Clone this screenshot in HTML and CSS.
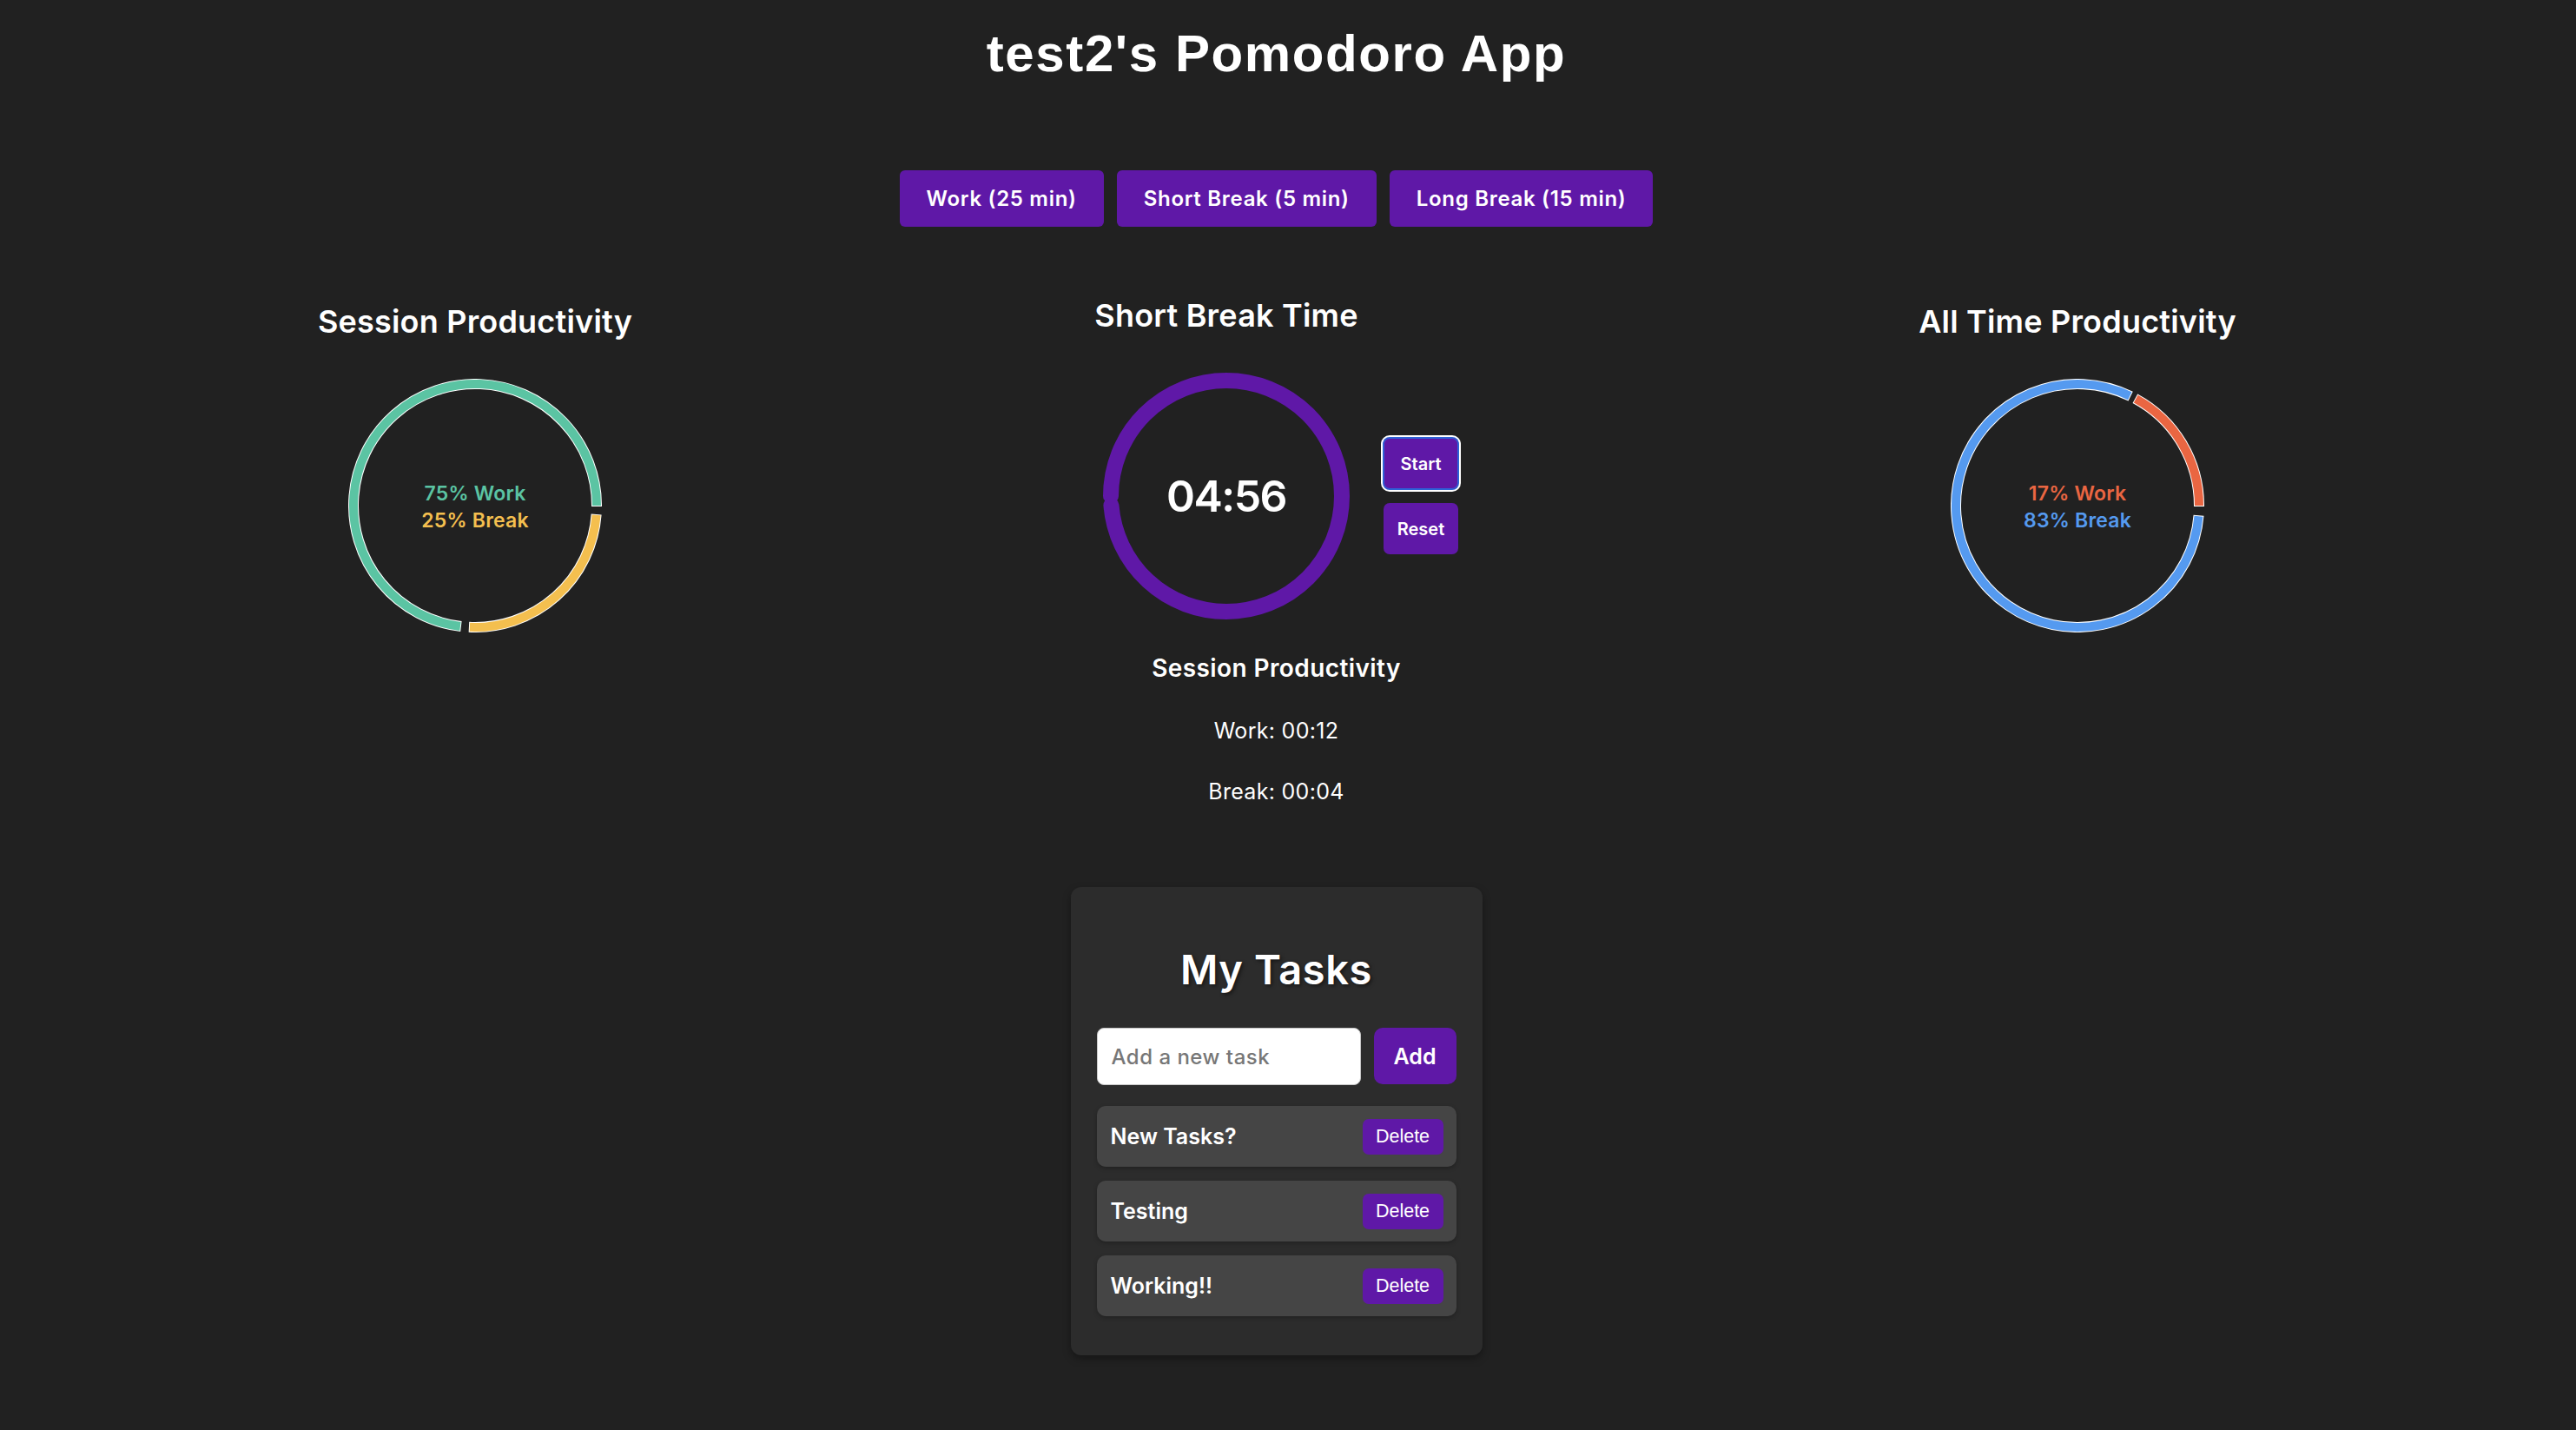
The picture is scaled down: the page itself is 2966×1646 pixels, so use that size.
FILE: index.html
```html
<!DOCTYPE html>
<html lang="en">
<head>
<meta charset="utf-8">
<title>test2's Pomodoro App</title>
<link rel="stylesheet" href="styles.css">
</head>
<body>
<div class="page">
  <h1 class="app-title">test2's Pomodoro App</h1>

  <div class="modes">
    <button class="mode-btn">Work (25 min)</button>
    <button class="mode-btn">Short Break (5 min)</button>
    <button class="mode-btn">Long Break (15 min)</button>
  </div>

  <div class="stats-row">
    <section class="chart-col chart-left">
      <h3 class="col-title">Session Productivity</h3>
      <div class="donut">
        <svg class="donut-svg" width="292" height="292" viewBox="0 0 292 292">
          <path class="seg-outline" d="M129.91 285.07 A140 140 0 1 1 286 146.98"/>
          <path class="seg seg-green" d="M128.94 284.96 A140 140 0 1 1 286 146"/>
          <path class="seg-outline" d="M285.64 156.01 A140 140 0 0 1 138.92 285.82"/>
          <path class="seg seg-yellow" d="M285.57 156.98 A140 140 0 0 1 139.89 285.87"/>
        </svg>
        <div class="donut-label">
          <span class="c-green">75% Work</span>
          <span class="c-yellow">25% Break</span>
        </div>
      </div>
    </section>

    <section class="timer-col">
      <h3 class="col-title timer-title">Short Break Time</h3>
      <div class="timer-body">
        <div class="timer-ring">
          <svg width="284" height="284" viewBox="0 0 284 284">
            <circle class="ring" cx="142" cy="142" r="133" transform="rotate(180 142 142)"/>
          </svg>
          <span class="timer-time">04:56</span>
        </div>
        <div class="timer-btns">
          <button class="small-btn is-focused">Start</button>
          <button class="small-btn">Reset</button>
        </div>
      </div>
    </section>

    <section class="chart-col chart-right">
      <h3 class="col-title">All Time Productivity</h3>
      <div class="donut">
        <svg class="donut-svg" width="292" height="292" viewBox="0 0 292 292">
          <path class="seg-outline" d="M212.37 22.73 A140 140 0 0 1 286 146.98"/>
          <path class="seg seg-orange" d="M213.22 23.2 A140 140 0 0 1 286 146"/>
          <path class="seg-outline" d="M285.55 157.23 A140 140 0 1 1 207.15 20.06"/>
          <path class="seg seg-blue" d="M285.47 158.2 A140 140 0 1 1 206.27 19.64"/>
        </svg>
        <div class="donut-label">
          <span class="c-orange">17% Work</span>
          <span class="c-blue">83% Break</span>
        </div>
      </div>
    </section>
  </div>

  <div class="session">
    <h4 class="session-title">Session Productivity</h4>
    <p class="session-line first">Work: 00:12</p>
    <p class="session-line">Break: 00:04</p>
  </div>

  <div class="tasks-card">
    <h2 class="tasks-title">My Tasks</h2>
    <div class="task-form">
      <input class="task-input" type="text" placeholder="Add a new task">
      <button class="add-btn">Add</button>
    </div>
    <ul class="task-list">
      <li class="task-item"><span class="task-name">New Tasks?</span><button class="del-btn">Delete</button></li>
      <li class="task-item"><span class="task-name">Testing</span><button class="del-btn">Delete</button></li>
      <li class="task-item"><span class="task-name">Working!!</span><button class="del-btn">Delete</button></li>
    </ul>
  </div>
</div>
</body>
</html>
```

FILE: styles.css
```css
* { box-sizing: border-box; }

html, body {
  margin: 0;
  padding: 0;
  background: #212121;
}

body {
  color: #ffffff;
  font-family: Inter, "Open Sans", sans-serif;
}

.page {
  width: 2939px;
  display: flex;
  flex-direction: column;
  align-items: center;
  padding-bottom: 80px;
}

.app-title {
  margin: 28px 0 0;
  font-family: "Liberation Sans", Arial, sans-serif;
  font-weight: 700;
  font-size: 60px;
  line-height: 67px;
  letter-spacing: 1.6px;
  color: #ffffff;
}

.modes {
  margin-top: 101px;
  display: flex;
  gap: 15px;
}

.mode-btn {
  height: 65px;
  padding: 0 31px;
  border: none;
  border-radius: 6px;
  background: #5f18a7;
  color: #ffffff;
  font-family: Inter, "Open Sans", sans-serif;
  font-weight: 600;
  font-size: 24px;
  letter-spacing: 0.7px;
}

.stats-row {
  margin-top: 80px;
  align-self: stretch;
  display: flex;
  align-items: flex-start;
  padding-left: 347px;
}

.chart-col {
  width: 400px;
  padding-top: 7px;
  display: flex;
  flex-direction: column;
  align-items: center;
}

.chart-left { margin-right: 523px; }
.chart-right { margin-left: 513px; }

.col-title {
  margin: 0;
  font-weight: 600;
  font-size: 36px;
  line-height: 44px;
  letter-spacing: 0.2px;
  white-space: nowrap;
}

.donut {
  position: relative;
  margin-top: 44px;
  width: 292px;
  height: 292px;
}

.donut-svg { display: block; }

.seg-outline {
  fill: none;
  stroke: #ffffff;
  stroke-width: 12;
}

.seg {
  fill: none;
  stroke-width: 10;
}

.seg-green { stroke: #5bc4a3; }
.seg-yellow { stroke: #f4bf4f; }
.seg-orange { stroke: #ea6642; }
.seg-blue { stroke: #559af0; }

.donut-label {
  position: absolute;
  inset: 0;
  padding-top: 4px;
  display: flex;
  flex-direction: column;
  align-items: center;
  justify-content: center;
  font-weight: 600;
  font-size: 23px;
  line-height: 31px;
  letter-spacing: 0.2px;
}

.c-green { color: #5bc4a3; }
.c-yellow { color: #f4bf4f; }
.c-orange { color: #ea6642; }
.c-blue { color: #559af0; }

.timer-col {
  display: grid;
  grid-template-columns: 284px auto;
  column-gap: 39px;
}

.timer-title {
  grid-column: 1;
  justify-self: center;
}

.timer-body {
  grid-column: 1 / span 2;
  margin-top: 44px;
  display: flex;
  align-items: center;
  gap: 39px;
}

.timer-ring {
  position: relative;
  width: 284px;
  height: 284px;
}

.timer-ring svg { display: block; }

.ring {
  fill: none;
  stroke: #5f18a7;
  stroke-width: 18;
  stroke-linecap: round;
  stroke-dasharray: 824.8 10.9;
}

.timer-time {
  position: absolute;
  inset: 0;
  display: flex;
  align-items: center;
  justify-content: center;
  font-weight: 600;
  font-size: 50px;
  letter-spacing: -1.5px;
}

.timer-btns {
  display: flex;
  flex-direction: column;
  gap: 16px;
}

.small-btn {
  width: 86px;
  height: 59px;
  border: none;
  border-radius: 7px;
  background: #5f18a7;
  color: #ffffff;
  font-family: Inter, "Open Sans", sans-serif;
  font-weight: 600;
  font-size: 20px;
  padding: 0;
}

.small-btn.is-focused {
  box-shadow: 0 0 0 1px #2d62d6, 0 0 0 3px #ffffff, inset 0 0 0 1px #2d62d6;
}

.session {
  margin-top: 24px;
  display: flex;
  flex-direction: column;
  align-items: center;
}

.session-title {
  margin: 0;
  font-weight: 600;
  font-size: 28px;
  line-height: 34px;
  letter-spacing: 0.4px;
}

.session-line {
  margin: 36px 0 0;
  font-weight: 400;
  font-size: 25px;
  line-height: 34px;
  letter-spacing: 0.3px;
}

.session-line.first { margin-top: 38px; }

.tasks-card {
  margin-top: 93px;
  width: 474px;
  padding: 66px 30px 45px;
  background: #2c2c2c;
  border-radius: 12px;
  box-shadow: 0 4px 10px rgba(0, 0, 0, 0.35);
  display: flex;
  flex-direction: column;
  align-items: center;
}

.tasks-title {
  margin: 0;
  font-weight: 600;
  font-size: 47px;
  line-height: 58px;
  letter-spacing: 0.6px;
  text-shadow: 2px 2px 4px rgba(0, 0, 0, 0.5);
}

.task-form {
  margin-top: 38px;
  display: flex;
  gap: 15px;
  width: 100%;
}

.task-input {
  width: 304px;
  height: 66px;
  border: 1px solid #c8c8c8;
  border-radius: 8px;
  padding: 0 16px;
  background: #ffffff;
  font-family: Inter, "Open Sans", sans-serif;
  font-weight: 500;
  font-size: 24px;
  letter-spacing: 0.5px;
  color: #222;
}

.task-input::placeholder { color: #777777; }

.add-btn {
  width: 95px;
  height: 65px;
  border: none;
  border-radius: 10px;
  background: #5f18a7;
  color: #ffffff;
  font-family: Inter, "Open Sans", sans-serif;
  font-weight: 600;
  font-size: 25px;
  padding: 0;
}

.task-list {
  list-style: none;
  margin: 24px 0 0;
  padding: 0;
  width: 100%;
  display: flex;
  flex-direction: column;
  gap: 16px;
}

.task-item {
  height: 70px;
  display: flex;
  align-items: center;
  justify-content: space-between;
  padding: 0 15px 0 16px;
  background: #454545;
  border-radius: 10px;
  box-shadow: 0 2px 5px rgba(0, 0, 0, 0.25);
}

.task-name {
  font-weight: 600;
  font-size: 25px;
}

.del-btn {
  width: 93px;
  height: 41px;
  border: none;
  border-radius: 7px;
  background: #5f18a7;
  color: #ffffff;
  font-family: "Liberation Sans", Arial, sans-serif;
  font-size: 21.5px;
  padding: 0;
}
```
